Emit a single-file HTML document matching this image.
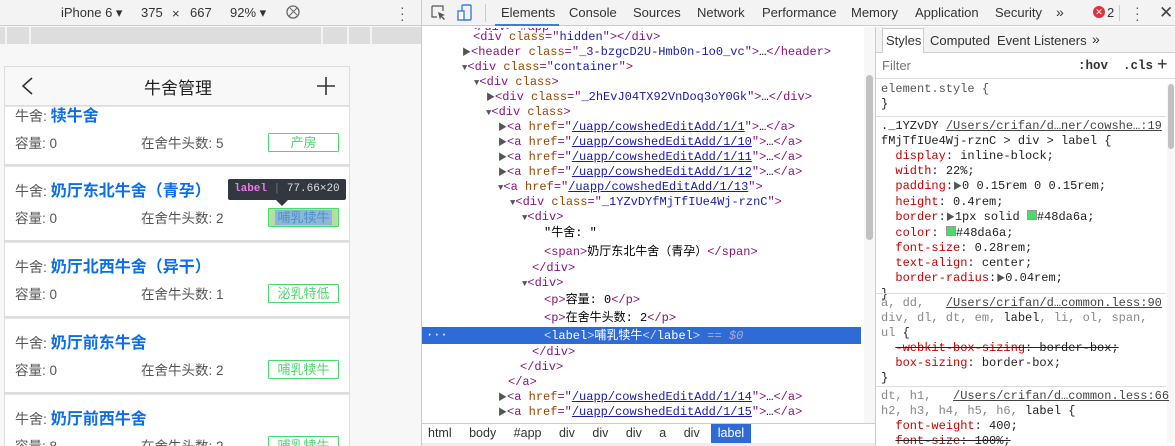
<!DOCTYPE html>
<html><head><meta charset="utf-8"><style>
*{margin:0;padding:0;box-sizing:border-box}
html,body{width:1175px;height:446px;overflow:hidden}
body{position:relative;background:#fff;font-family:"Liberation Sans","Noto Sans CJK SC",sans-serif}
.a{position:absolute;white-space:nowrap}
.m{font-family:"Liberation Mono","Noto Sans CJK SC",monospace;font-size:12px;line-height:15px}
.tg{color:#881280}.at{color:#994500}.v{color:#1a1aa6}.lk{color:#1a1aa6;text-decoration:underline}
.tri{color:#555;font-size:9px}
.card{position:absolute;left:5px;width:344px;background:#fff;border-bottom:2px solid #ddd;overflow:hidden}
.nm{position:absolute;left:10px;font-size:14px;color:#555}
.nm b{color:#0a6ee8;font-size:16px;font-weight:bold}
.row{position:absolute;left:10px;font-size:13.5px;color:#555;width:334px}
.lb{position:absolute;left:263px;width:71px;height:19px;border:1px solid #48da6a;color:#48da6a;font-size:13px;text-align:center;line-height:17px;border-radius:1px}
.p{color:#c80000}
</style></head><body>
<div class="a" style="left:0;top:0;width:421px;height:446px;background:#f7f7f7"></div>
<div class="a" style="left:0;top:0;width:421px;height:26px;background:#f3f3f3;border-bottom:1px solid #ccc"></div>
<div class="a" style="left:61px;top:5px;font-size:13px;color:#333">iPhone 6 ▾</div>
<div class="a" style="left:141px;top:5px;font-size:13px;color:#333">375</div>
<div class="a" style="left:172px;top:6px;font-size:13px;color:#333">×</div>
<div class="a" style="left:190px;top:5px;font-size:13px;color:#333">667</div>
<div class="a" style="left:230px;top:5px;font-size:13px;color:#333">92% ▾</div>
<svg class="a" style="left:285px;top:4px" width="16" height="16"><circle cx="8" cy="8" r="6" fill="none" stroke="#666" stroke-width="1.3"/><path d="M4 12L12 4M5 4L12 11" stroke="#666" stroke-width="1"/></svg>
<div class="a" style="left:400px;top:4px;font-size:14px;color:#555;line-height:6px">·<br>·<br>·</div>
<div class="a" style="left:0;top:27px;width:421px;height:17px;background:#ddd"></div>
<div class="a" style="left:5px;top:27px;width:2px;height:17px;background:#f3f3f3"></div>
<div class="a" style="left:29px;top:27px;width:2px;height:17px;background:#f3f3f3"></div>
<div class="a" style="left:321px;top:27px;width:2px;height:17px;background:#f3f3f3"></div>
<div class="a" style="left:347px;top:27px;width:2px;height:17px;background:#f3f3f3"></div>
<div class="a" style="left:370px;top:27px;width:2px;height:17px;background:#f3f3f3"></div>
<div class="a" style="left:4px;top:66px;width:346px;height:380px;background:#e6e6e6;border:1px solid #ddd"></div>
<div class="a" style="left:5px;top:67px;width:344px;height:39px;background:#f8f8f8;border-bottom:1px solid #ddd"></div>
<svg class="a" style="left:20px;top:76px" width="14" height="20"><path d="M12 2 L3 10 L12 18" fill="none" stroke="#333" stroke-width="1.6"/></svg>
<div class="a" style="left:144px;top:74px;font-size:17px;color:#222">牛舍管理</div>
<svg class="a" style="left:316px;top:76px" width="20" height="20"><path d="M10 1V19M1 10H19" stroke="#333" stroke-width="1.6"/></svg>

<div class="card" style="top:107px;height:59px"><div class="nm" style="top:-5px">牛舍: <b>犊牛舍</b></div><div class="row" style="top:25px">容量: 0<span class="a" style="left:126px">在舍牛头数: 5</span></div><div class="lb" style="top:26px">产房</div></div>
<div class="card" style="top:167px;height:75px"><div class="nm" style="top:10px">牛舍: <b>奶厅东北牛舍（青孕）</b></div><div class="row" style="top:40px">容量: 0<span class="a" style="left:126px">在舍牛头数: 2</span></div><div class="lb" style="top:41px;background:#b5dea2;color:#5a9fd6"><span style="background:#8cb8d8;color:#4f8fc8;padding:0 2px">哺乳犊牛</span></div></div>
<div class="card" style="top:243px;height:75px"><div class="nm" style="top:10px">牛舍: <b>奶厅北西牛舍（异干）</b></div><div class="row" style="top:40px">容量: 0<span class="a" style="left:126px">在舍牛头数: 1</span></div><div class="lb" style="top:41px">泌乳特低</div></div>
<div class="card" style="top:319px;height:75px"><div class="nm" style="top:10px">牛舍: <b>奶厅前东牛舍</b></div><div class="row" style="top:40px">容量: 0<span class="a" style="left:126px">在舍牛头数: 2</span></div><div class="lb" style="top:41px">哺乳犊牛</div></div>
<div class="card" style="top:395px;height:51px;border-bottom:none"><div class="nm" style="top:10px">牛舍: <b>奶厅前西牛舍</b></div><div class="row" style="top:40px">容量: 8<span class="a" style="left:126px">在舍牛头数: 2</span></div><div class="lb" style="top:41px">哺乳犊牛</div></div>
<div class="a" style="left:228px;top:179px;width:118px;height:21px;background:#333740;border-radius:2px;font-family:'Liberation Mono',monospace;font-size:11px;line-height:21px;color:#ddd;padding-left:6px"><span style="color:#ee78e6;font-weight:bold">label</span> <span style="color:#777">|</span> 77.66×20</div>
<div class="a" style="left:276px;top:200px;width:0;height:0;border-left:6px solid transparent;border-right:6px solid transparent;border-top:6px solid #333740"></div>

<div class="a" style="left:421px;top:0;width:1px;height:446px;background:#ccc"></div>
<div class="a" style="left:422px;top:0;width:753px;height:26px;background:#f3f3f3;border-bottom:1px solid #ccc"></div>
<svg class="a" style="left:431px;top:5px" width="16" height="16"><path d="M1 1H12V6M1 1V12H6" fill="none" stroke="#555" stroke-width="1.2"/><path d="M7 7L14 10L11 11L14 14L13 15L10 12L9 15Z" fill="#555"/></svg>
<svg class="a" style="left:457px;top:4px" width="16" height="18"><rect x="5" y="1" width="9" height="15" rx="1" fill="none" stroke="#3b7ddd" stroke-width="1.4"/><rect x="1" y="7" width="6" height="9" fill="#fff" stroke="#3b7ddd" stroke-width="1.4"/></svg>
<div class="a" style="left:485px;top:4px;width:1px;height:18px;background:#ccc"></div>
<div class="a" style="left:501px;top:5px;font-size:13px;color:#333">Elements</div>
<div class="a" style="left:495px;top:24px;width:64px;height:2px;background:#3b7ddd"></div>
<div class="a" style="left:569px;top:5px;font-size:13px;color:#333">Console</div>
<div class="a" style="left:633px;top:5px;font-size:13px;color:#333">Sources</div>
<div class="a" style="left:697px;top:5px;font-size:13px;color:#333">Network</div>
<div class="a" style="left:762px;top:5px;font-size:13px;color:#333">Performance</div>
<div class="a" style="left:851px;top:5px;font-size:13px;color:#333">Memory</div>
<div class="a" style="left:915px;top:5px;font-size:13px;color:#333">Application</div>
<div class="a" style="left:995px;top:5px;font-size:13px;color:#333">Security</div>
<div class="a" style="left:1056px;top:4px;font-size:14px;color:#333">»</div>
<div class="a" style="left:1093px;top:6px;width:12px;height:12px;border-radius:50%;background:#e0323b;color:#fff;font-size:9px;line-height:12px;text-align:center">✕</div>
<div class="a" style="left:1107px;top:5px;font-size:13px;color:#333">2</div>
<div class="a" style="left:1119px;top:5px;width:1px;height:16px;background:#ccc"></div>
<div class="a" style="left:1135px;top:4px;font-size:14px;color:#555;line-height:6px">·<br>·<br>·</div>
<div class="a" style="left:1159px;top:3px;font-size:17px;color:#444">✕</div>

<div class="a m" style="left:422px;top:28px;width:440px;height:9px;overflow:hidden"><span style="position:relative;top:-8px;left:48px" class="tg">&lt;/div&gt; #app</span></div>
<div class="a m" style="left:473px;top:30px"><span class="tg">&lt;div</span> <span class="at">class</span><span class="tg">="</span><span class="v">hidden</span><span class="tg">"&gt;&lt;/div&gt;</span></div>
<div class="a m" style="left:462px;top:45px"><span class="tri">▶</span><span class="tg">&lt;header</span> <span class="at">class</span><span class="tg">="</span><span class="v">_3-bzgcD2U-Hmb0n-1o0_vc</span><span class="tg">"&gt;</span>…<span class="tg">&lt;/header&gt;</span></div>
<div class="a m" style="left:462px;top:60px"><span class="tri">▼</span><span class="tg">&lt;div</span> <span class="at">class</span><span class="tg">="</span><span class="v">container</span><span class="tg">"&gt;</span></div>
<div class="a m" style="left:474px;top:75px"><span class="tri">▼</span><span class="tg">&lt;div</span> <span class="at">class</span><span class="tg">&gt;</span></div>
<div class="a m" style="left:486px;top:90px"><span class="tri">▶</span><span class="tg">&lt;div</span> <span class="at">class</span><span class="tg">="</span><span class="v">_2hEvJ04TX92VnDoq3oY0Gk</span><span class="tg">"&gt;</span>…<span class="tg">&lt;/div&gt;</span></div>
<div class="a m" style="left:486px;top:105px"><span class="tri">▼</span><span class="tg">&lt;div</span> <span class="at">class</span><span class="tg">&gt;</span></div>
<div class="a m" style="left:498px;top:120px"><span class="tri">▶</span><span class="tg">&lt;a</span> <span class="at">href</span><span class="tg">="</span><span class="lk">/uapp/cowshedEditAdd/1/1</span><span class="tg">"&gt;</span>…<span class="tg">&lt;/a&gt;</span></div>
<div class="a m" style="left:498px;top:135px"><span class="tri">▶</span><span class="tg">&lt;a</span> <span class="at">href</span><span class="tg">="</span><span class="lk">/uapp/cowshedEditAdd/1/10</span><span class="tg">"&gt;</span>…<span class="tg">&lt;/a&gt;</span></div>
<div class="a m" style="left:498px;top:150px"><span class="tri">▶</span><span class="tg">&lt;a</span> <span class="at">href</span><span class="tg">="</span><span class="lk">/uapp/cowshedEditAdd/1/11</span><span class="tg">"&gt;</span>…<span class="tg">&lt;/a&gt;</span></div>
<div class="a m" style="left:498px;top:165px"><span class="tri">▶</span><span class="tg">&lt;a</span> <span class="at">href</span><span class="tg">="</span><span class="lk">/uapp/cowshedEditAdd/1/12</span><span class="tg">"&gt;</span>…<span class="tg">&lt;/a&gt;</span></div>
<div class="a m" style="left:498px;top:180px"><span class="tri">▼</span><span class="tg">&lt;a</span> <span class="at">href</span><span class="tg">="</span><span class="lk">/uapp/cowshedEditAdd/1/13</span><span class="tg">"&gt;</span></div>
<div class="a m" style="left:510px;top:195px"><span class="tri">▼</span><span class="tg">&lt;div</span> <span class="at">class</span><span class="tg">="</span><span class="v">_1YZvDYfMjTfIUe4Wj-rznC</span><span class="tg">"&gt;</span></div>
<div class="a m" style="left:522px;top:210px"><span class="tri">▼</span><span class="tg">&lt;div&gt;</span></div>
<div class="a m" style="left:544px;top:226px">"牛舍: "</div>
<div class="a m" style="left:544px;top:245px"><span class="tg">&lt;span&gt;</span>奶厅东北牛舍（青孕）<span class="tg">&lt;/span&gt;</span></div>
<div class="a m" style="left:532px;top:261px"><span class="tg">&lt;/div&gt;</span></div>
<div class="a m" style="left:522px;top:276px"><span class="tri">▼</span><span class="tg">&lt;div&gt;</span></div>
<div class="a m" style="left:544px;top:293px"><span class="tg">&lt;p&gt;</span>容量: 0<span class="tg">&lt;/p&gt;</span></div>
<div class="a m" style="left:544px;top:311px"><span class="tg">&lt;p&gt;</span>在舍牛头数: 2<span class="tg">&lt;/p&gt;</span></div>
<div class="a" style="left:422px;top:327px;width:439px;height:17px;background:#2f6bd6"></div>
<div class="a m" style="left:426px;top:328px;color:#fff">···</div>
<div class="a m" style="left:544px;top:329px;color:#fff"><span style="color:#cfd8f0">&lt;</span>label<span style="color:#cfd8f0">&gt;</span>哺乳犊牛<span style="color:#cfd8f0">&lt;/</span>label<span style="color:#cfd8f0">&gt;</span> <span style="color:#aac">== <i>$0</i></span></div>
<div class="a m" style="left:532px;top:345px"><span class="tg">&lt;/div&gt;</span></div>
<div class="a m" style="left:520px;top:360px"><span class="tg">&lt;/div&gt;</span></div>
<div class="a m" style="left:508px;top:375px"><span class="tg">&lt;/a&gt;</span></div>
<div class="a m" style="left:498px;top:390px"><span class="tri">▶</span><span class="tg">&lt;a</span> <span class="at">href</span><span class="tg">="</span><span class="lk">/uapp/cowshedEditAdd/1/14</span><span class="tg">"&gt;</span>…<span class="tg">&lt;/a&gt;</span></div>
<div class="a m" style="left:498px;top:405px"><span class="tri">▶</span><span class="tg">&lt;a</span> <span class="at">href</span><span class="tg">="</span><span class="lk">/uapp/cowshedEditAdd/1/15</span><span class="tg">"&gt;</span>…<span class="tg">&lt;/a&gt;</span></div>
<div class="a" style="left:864px;top:27px;width:11px;height:397px;background:#f7f7f7"></div>
<div class="a" style="left:866px;top:75px;width:7px;height:165px;background:#c1c1c1;border-radius:4px"></div>
<div class="a" style="left:422px;top:423px;width:453px;height:23px;background:#fff;border-top:1px solid #ccc"></div>
<div class="a" style="left:428px;top:426px;font-size:12.5px;color:#333;word-spacing:14px">html body #app div div div a div div</div>
<div class="a" style="left:711px;top:424px;width:40px;height:19px;background:#2f6bd6;color:#fff;font-size:12.5px;text-align:center;line-height:18px">label</div>
<div class="a" style="left:422px;top:443px;width:453px;height:3px;background:#eee"></div>

<div class="a" style="left:875px;top:27px;width:1px;height:419px;background:#ccc"></div>
<div class="a" style="left:876px;top:27px;width:299px;height:26px;background:#f3f3f3;border-bottom:1px solid #ccc"></div>
<div class="a" style="left:882px;top:28px;width:42px;height:25px;background:#fff;border:1px solid #ccc;border-bottom:none"></div>
<div class="a" style="left:886px;top:33px;font-size:13px;color:#333">Styles</div>
<div class="a" style="left:930px;top:33px;font-size:13px;color:#333">Computed</div>
<div class="a" style="left:997px;top:33px;font-size:13px;color:#333">Event Listeners</div>
<div class="a" style="left:1092px;top:31px;font-size:14px;color:#333">»</div>
<div class="a" style="left:876px;top:53px;width:299px;height:26px;border-bottom:1px solid #ddd"></div>
<div class="a" style="left:882px;top:58px;font-size:13px;color:#777">Filter</div>
<div class="a m" style="left:1078px;top:59px;color:#333;font-weight:bold;font-size:12.5px">:hov&nbsp;&nbsp;.cls</div>
<div class="a" style="left:1157px;top:54px;font-size:18px;color:#333">+</div>
<div class="a" style="left:1167px;top:83px;width:7px;height:360px;background:#f7f7f7"></div>
<div class="a" style="left:1168px;top:84px;width:6px;height:65px;background:#c1c1c1;border-radius:3px"></div>
<div class="a m" style="left:881px;top:82px;color:#555">element.style {<br><span style="color:#222">}</span></div>
<div class="a" style="left:876px;top:116px;width:290px;height:1px;background:#ddd"></div>
<div class="a m" style="left:881px;top:119px;color:#222">._1YZvDY <span style="color:#444;text-decoration:underline">/Users/crifan/d…ner/cowshe…:19</span><br>fMjTfIUe4Wj-rznC &gt; div &gt; label {<br>
&nbsp;&nbsp;<span class="p">display</span>: inline-block;<br>
&nbsp;&nbsp;<span class="p">width</span>: 22%;<br>
&nbsp;&nbsp;<span class="p">padding</span>:<span class="tri">▶</span>0 0.15rem 0 0.15rem;<br>
&nbsp;&nbsp;<span class="p">height</span>: 0.4rem;<br>
&nbsp;&nbsp;<span class="p">border</span>:<span class="tri">▶</span>1px solid <span style="display:inline-block;width:10px;height:10px;background:#48da6a;border:1px solid #999"></span>#48da6a;<br>
&nbsp;&nbsp;<span class="p">color</span>: <span style="display:inline-block;width:10px;height:10px;background:#48da6a;border:1px solid #999"></span>#48da6a;<br>
&nbsp;&nbsp;<span class="p">font-size</span>: 0.28rem;<br>
&nbsp;&nbsp;<span class="p">text-align</span>: center;<br>
&nbsp;&nbsp;<span class="p">border-radius</span>:<span class="tri">▶</span>0.04rem;<br>}</div>
<div class="a" style="left:876px;top:293px;width:290px;height:1px;background:#ddd"></div>
<div class="a m" style="left:881px;top:296px;color:#888">a, dd,&nbsp;&nbsp;&nbsp;<span style="color:#444;text-decoration:underline">/Users/crifan/d…common.less:90</span><br>div, dl, dt, em, <span style="color:#222">label</span>, li, ol, span,<br>ul <span style="color:#222">{</span><br>
<span style="color:#222">&nbsp;&nbsp;<s><span class="p">-webkit-box-sizing</span>: border-box;</s><br>
&nbsp;&nbsp;<span class="p">box-sizing</span>: border-box;<br>}</span></div>
<div class="a" style="left:876px;top:386px;width:290px;height:1px;background:#ddd"></div>
<div class="a m" style="left:881px;top:389px;color:#888">dt, h1,&nbsp;&nbsp;&nbsp;<span style="color:#444;text-decoration:underline">/Users/crifan/d…common.less:66</span><br>h2, h3, h4, h5, h6, <span style="color:#222">label {</span><br>
<span style="color:#222">&nbsp;&nbsp;<span class="p">font-weight</span>: 400;<br>
&nbsp;&nbsp;<s><span class="p">font-size</span>: 100%;</s></span></div>
</body></html>
